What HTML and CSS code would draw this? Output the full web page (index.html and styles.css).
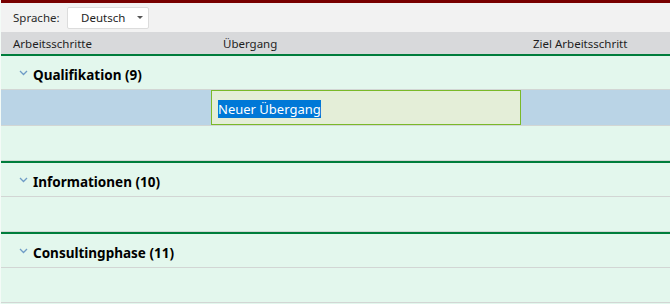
FILE: index.html
```html
<!DOCTYPE html>
<html lang="de">

<head>
    <meta charset="UTF-8">
    <title>Übergänge</title>
    <link rel="stylesheet" href="styles.css">
</head>

<body>
    <div class="topbar"></div>

    <div class="toolbar">
        <span class="label">Sprache:</span>
        <div class="dropdown">
            <span>Deutsch</span>
            <span class="caret"></span>
        </div>
    </div>

    <div class="grid-head">
        <div>Arbeitsschritte</div>
        <div>Übergang</div>
        <div>Ziel Arbeitsschritt</div>
    </div>

    <!-- Gruppe 1 -->
    <div class="group">
        <div class="group-head">
            <svg class="chevron" width="9" height="6" viewBox="0 0 9 6"><path d="M1 1 L4.5 4.5 L8 1" fill="none" stroke="#6f9cc6" stroke-width="1.3"/></svg>
            <span>Qualifikation (9)</span>
        </div>
        <div class="row selected">
            <div></div>
            <div class="editor"><span class="sel">Neuer Übergang</span></div>
            <div></div>
        </div>
        <div class="row"></div>
    </div>

    <!-- Gruppe 2 -->
    <div class="group">
        <div class="group-head">
            <svg class="chevron" width="9" height="6" viewBox="0 0 9 6"><path d="M1 1 L4.5 4.5 L8 1" fill="none" stroke="#6f9cc6" stroke-width="1.3"/></svg>
            <span>Informationen (10)</span>
        </div>
        <div class="row"></div>
    </div>

    <!-- Gruppe 3 -->
    <div class="group">
        <div class="group-head">
            <svg class="chevron" width="9" height="6" viewBox="0 0 9 6"><path d="M1 1 L4.5 4.5 L8 1" fill="none" stroke="#6f9cc6" stroke-width="1.3"/></svg>
            <span>Consultingphase (11)</span>
        </div>
        <div class="row"></div>
    </div>
</body>

</html>
```

FILE: styles.css
```css
body {
    margin: 0;
    padding: 0;
    font-family: "Noto Sans", "Open Sans", sans-serif;
    font-size: 11.5px;
    color: #1e1e1e;
    background-color: #e3f7ed;
    height: 304px;
    overflow: hidden;
    border-left: 1px solid #f4fbf7;
}

.topbar {
    height: 3px;
    background-color: #780000;
}

.toolbar {
    height: 29px;
    background-color: #f2f2f2;
    display: flex;
    align-items: center;
    padding-left: 12px;
}

.label {
    width: 54px;
    color: #2a2a2a;
}

.dropdown {
    width: 67px;
    height: 20px;
    background: #ffffff;
    border: 1px solid #dcdcdc;
    border-radius: 2px;
    display: flex;
    align-items: center;
    padding-left: 13px;
    position: relative;
}

.caret {
    position: absolute;
    right: 5px;
    top: 8px;
    border-left: 3px solid transparent;
    border-right: 3px solid transparent;
    border-top: 3px solid #555;
}

.grid-head {
    height: 22px;
    background-color: #d8d9db;
    display: grid;
    grid-template-columns: 210px 310px 1fr;
    align-items: center;
    padding-top: 1px;
    box-sizing: border-box;
}

.grid-head div {
    padding-left: 12px;
}

.group {
    border-top: 2px solid #007d3c;
}

.group-head {
    height: 34px;
    box-sizing: border-box;
    padding-top: 5px;
    display: flex;
    align-items: center;
    padding-left: 18px;
    border-bottom: 1px solid #d2d6d4;
    font-size: 13.5px;
    font-weight: bold;
    color: #000;
}

.chevron {
    margin-right: 5px;
    margin-top: -5px;
}

.row {
    height: 34px;
    border-bottom: 1px solid #d2d6d4;
    display: grid;
    grid-template-columns: 210px 310px 1fr;
}

.row.selected {
    height: 35px;
    background-color: #bad4e6;
}

.editor {
    background-color: #e4eed8;
    border: 1px solid #7ab929;
    display: flex;
    align-items: center;
    padding-left: 6px;
    padding-top: 2px;
    font-size: 13px;
}

.sel {
    background-color: #0078d7;
    color: #ffffff;
    line-height: 18px;
}
```
